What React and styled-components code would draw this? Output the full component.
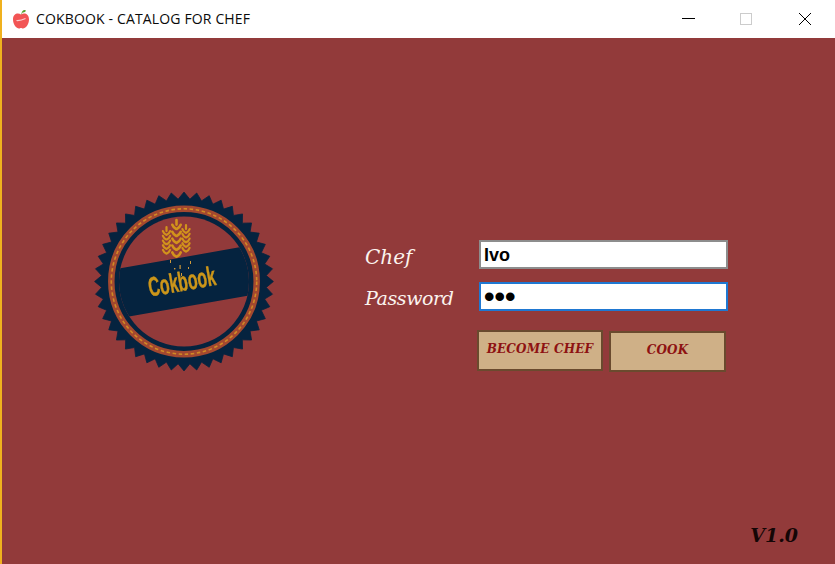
import React from "react";
import styled, { createGlobalStyle } from "styled-components";

const Global = createGlobalStyle`
  html, body { margin: 0; padding: 0; width: 835px; height: 564px; overflow: hidden; background: #923a3a; }
  * { box-sizing: border-box; }
`;

const Window = styled.div`
  width: 835px;
  height: 564px;
  display: flex;
  flex-direction: column;
  border-left: 2px solid #f0b11e;
  background: #923a3a;
`;

const TitleBar = styled.header`
  height: 38px;
  flex: none;
  display: flex;
  align-items: center;
  background: #fff;
  padding: 0 1px 0 10px;
`;

const AppIcon = styled.svg`
  width: 18px;
  height: 20px;
  flex: none;
  margin-right: 6px;
`;

const Title = styled.h1`
  margin: 0;
  flex: 1;
  font: 400 14px/38px "Open Sans", "Noto Sans", sans-serif;
  letter-spacing: 0.15px;
  color: #0a0a0a;
  white-space: nowrap;
`;

const WinButton = styled.div`
  width: 58px;
  height: 38px;
  display: flex;
  align-items: center;
  justify-content: center;
`;

const Main = styled.main`
  flex: 1;
  display: flex;
  flex-direction: column;
  min-height: 0;
`;

const Content = styled.section`
  display: flex;
  align-items: flex-start;
  padding: 154px 0 0 92px;
`;

const Badge = styled.svg`
  width: 180px;
  height: 180px;
  flex: none;
  display: block;
  filter: blur(0.35px);
`;

const Form = styled.form`
  margin: 48px 0 0 91px;
  display: grid;
  grid-template-columns: 114px 249px;
  grid-auto-rows: auto;
  row-gap: 13px;
`;

const Label = styled.label`
  height: 29px;
  padding-top: ${(p) => p.$drop}px;
  font: italic 400 ${(p) => p.$size}px/29px "DejaVu Serif", "Liberation Serif", serif;
  color: #fbf3ee;
  letter-spacing: ${(p) => p.$track}px;
  white-space: nowrap;
`;

const Field = styled.input`
  width: 249px;
  height: 29px;
  margin: 0;
  padding: ${(p) => p.$inset}px 3px 0;
  border: 2px solid ${(p) => (p.$active ? "#1f78d2" : "#8d8d8d")};
  border-radius: 0;
  outline: none;
  background: #fff;
  color: #000;
  font: 700 ${(p) => p.$size}px "Liberation Sans", Arial, sans-serif;
`;

const Buttons = styled.div`
  grid-column: 2;
  display: flex;
  align-items: flex-start;
  gap: 6px;
  margin: 6px 0 0 -2px;
`;

const ActionButton = styled.button`
  width: ${(p) => p.$w}px;
  height: 41px;
  margin: ${(p) => p.$top}px 0 0;
  padding: 0 0 3px;
  background: #cfb087;
  border: 2px solid #6a4a2e;
  border-radius: 0;
  color: #8e1212;
  font: italic 700 12px "DejaVu Serif", "Liberation Serif", serif;
  letter-spacing: 0.2px;
  white-space: nowrap;
`;

const Footer = styled.footer`
  margin-top: auto;
  display: flex;
  justify-content: flex-end;
  padding: 0 37px 16px 0;
`;

const Version = styled.span`
  font: italic 700 19px/26px "DejaVu Serif", "Liberation Serif", serif;
  color: #140606;
`;

const BADGE_NAVY = "#05233f";
const GOLD = "#cc961a";

function starburst(cx, cy, outer, inner, teeth) {
  const pts = [];
  for (let i = 0; i < teeth * 2; i++) {
    const r = i % 2 === 0 ? outer : inner;
    const a = (Math.PI * i) / teeth - Math.PI / 2;
    pts.push(`${(cx + r * Math.cos(a)).toFixed(2)},${(cy + r * Math.sin(a)).toFixed(2)}`);
  }
  return pts.join(" ");
}

function WheatEar({ x, top, bottom, half, weight }) {
  const rows = 5;
  const tipEnd = top + half * 1.1;
  const first = tipEnd + half * 0.9;
  const step = (bottom - first) / (rows - 1);
  const d = [`M${x} ${top}V${tipEnd}`];
  for (let i = 0; i < rows; i++) {
    const y = first + i * step;
    d.push(`M${x - half} ${y - half * 0.85}Q${x - half * 0.7} ${y - half * 0.1} ${x - 0.3} ${y + half * 0.15}`);
    d.push(`M${x + half} ${y - half * 0.85}Q${x + half * 0.7} ${y - half * 0.1} ${x + 0.3} ${y + half * 0.15}`);
  }
  return <path d={d.join("")} fill="none" stroke="#d2931c" strokeWidth={weight} strokeLinecap="round" />;
}

function Logo() {
  return (
    <Badge viewBox="0 0 180 180">
      <defs>
        <clipPath id="inner">
          <circle cx="90" cy="89.5" r="65" />
        </clipPath>
      </defs>
      <polygon
        points={starburst(90, 89.5, 89.4, 82.5, 44)}
        fill={BADGE_NAVY}
        stroke={BADGE_NAVY}
        strokeWidth="0.8"
        strokeLinejoin="round"
      />
      <circle cx="90" cy="89.5" r="72.7" fill="none" stroke="#a3482f" strokeWidth="6.5" />
      <circle cx="90" cy="89.5" r="72.7" fill="none" stroke="#d08a25" strokeWidth="1.6" strokeDasharray="3.5 2.6" />
      <circle cx="90" cy="89.5" r="65" fill="#923a3a" />
      <g clipPath="url(#inner)">
        <rect x="10" y="65.5" width="160" height="49" rx="1" fill={BADGE_NAVY} transform="rotate(-10 90 90)" />
      </g>
      <WheatEar x={72.5} top={35} bottom={61} half={3.6} weight={2.2} />
      <WheatEar x={92} top={33} bottom={59} half={3.6} weight={2.2} />
      <WheatEar x={82.5} top={28} bottom={64} half={4.2} weight={2.6} />
      <g fill="#d09a3a">
        <rect x="76" y="68" width="1" height="3" />
        <rect x="80" y="76" width="1.4" height="1.4" />
        <rect x="85.5" y="73" width="1.2" height="4" />
        <rect x="94" y="75" width="1" height="2" />
        <rect x="96" y="69" width="1" height="3" />
        <rect x="87" y="81" width="1" height="3" />
      </g>
      <text
        x="88"
        y="98.5"
        textAnchor="middle"
        textLength="68"
        lengthAdjust="spacingAndGlyphs"
        fontFamily="'Liberation Sans', Arial, sans-serif"
        fontWeight="700"
        fontSize="27"
        fill={GOLD}
        stroke={GOLD}
        strokeWidth="0.5"
        transform="rotate(-10 90 90)"
      >
        Cokbook
      </text>
    </Badge>
  );
}

export default function App() {
  return (
    <Window>
      <Global />
      <TitleBar>
        <AppIcon viewBox="0 0 18 20">
          <path d="M9 5.5C12 3.5 17 4.5 17 10.5C17 15.5 13.5 19.5 11 19.5C10 19.5 9.7 19 9 19C8.3 19 8 19.5 7 19.5C4.5 19.5 1 15.5 1 10.5C1 4.5 6 3.5 9 5.5Z" fill="#f25555" />
          <path d="M9.4 5.5C9.4 3.5 10 2 11.5 1.2C12.7 0.8 13.6 1.2 14 1.8C13 3.3 11.5 3.7 10.3 3.8C10 4.2 9.9 4.8 9.9 5.5Z" fill="#58a32d" />
          <path d="M4.5 11.5C7 11.7 10.5 11 13.5 9.5" stroke="#fbd0d0" strokeWidth="1.2" fill="none" />
        </AppIcon>
        <Title>COKBOOK - CATALOG FOR CHEF</Title>
        <WinButton>
          <svg width="14" height="14" viewBox="0 0 14 14"><path d="M0 6.5H13" stroke="#000" strokeWidth="1" /></svg>
        </WinButton>
        <WinButton>
          <svg width="14" height="14" viewBox="0 0 14 14"><rect x="0.5" y="1.5" width="11" height="11" fill="none" stroke="#cccccc" strokeWidth="1" /></svg>
        </WinButton>
        <WinButton>
          <svg width="14" height="14" viewBox="0 0 14 14"><path d="M1 1L13 13M13 1L1 13" stroke="#000" strokeWidth="1" /></svg>
        </WinButton>
      </TitleBar>
      <Main>
        <Content>
          <Logo />
          <Form>
            <Label $size={20} $track={0} $drop={3}>Chef</Label>
            <Field readOnly value="Ivo" $size={18} $inset={1} />
            <Label $size={19} $track={-0.4} $drop={2}>Password</Label>
            <Field readOnly type="password" value="abc" $active $size={30} $inset={0} />
            <Buttons>
              <ActionButton type="button" $w={126} $top={0}>BECOME CHEF</ActionButton>
              <ActionButton type="button" $w={117} $top={1}>COOK</ActionButton>
            </Buttons>
          </Form>
        </Content>
        <Footer>
          <Version>V1.0</Version>
        </Footer>
      </Main>
    </Window>
  );
}
